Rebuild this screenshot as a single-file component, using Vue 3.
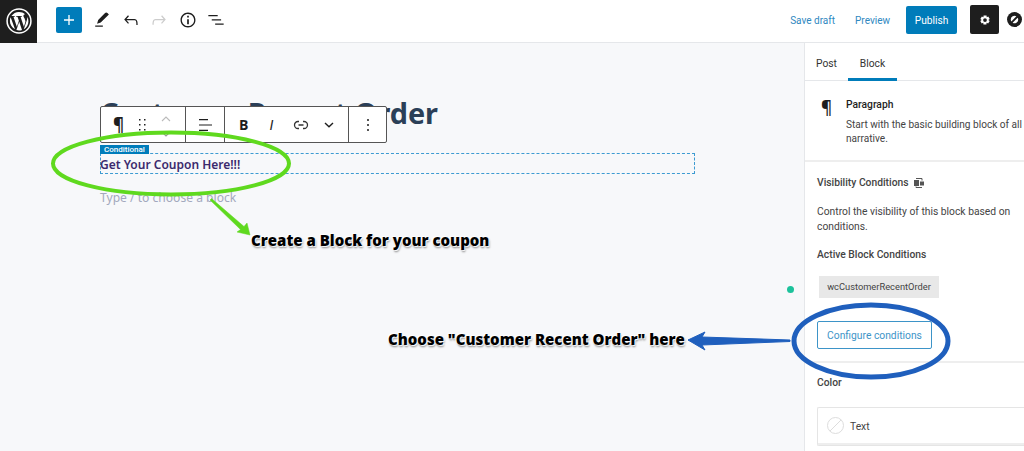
<template>
  <div class="page">
    <header class="topbar">
      <div class="wp-logo">
        <svg viewBox="0 0 24 24" width="26" height="26">
          <circle cx="12" cy="12" r="11" fill="none" stroke="#fff" stroke-width="1.4" />
          <path d="M3.6 12c0 3.3 1.9 6.200 4.700 7.500L4.300 8.600C3.800 9.600 3.600 10.800 3.600 12zM17.600 11.600c0-1-.4-1.800-.7-2.300-.4-.7-.8-1.300-.8-2 0-.8.600-1.500 1.400-1.500h.1C16.100 4.400 14.200 3.600 12 3.600c-2.900 0-5.500 1.500-7 3.800h.5c.9 0 2.300-.1 2.300-.1.500 0 .5.700.1.700 0 0-.5.100-1 .1l3.100 9.300 1.900-5.700-1.300-3.600c-.5 0-.9-.1-.9-.1-.5 0-.4-.8 0-.7 0 0 1.400.1 2.300.1.900 0 2.300-.1 2.300-.1.500 0 .5.700.1.700 0 0-.5.100-1 .1l3.100 9.200.9-2.800c.4-1.200.6-2 .6-2.900zM12.200 12.800l-2.600 7.500c.8.200 1.600.4 2.400.4 1 0 2-.2 2.800-.5l-.1-.1-2.500-7.300zM19.600 8c0 .3.100.6.100 1 0 .9-.2 1.800-.7 3.100l-2.600 7.600c2.600-1.500 4.300-4.300 4.300-7.500 0-1.600-.4-3-1.100-4.200z" fill="#fff" />
        </svg>
      </div>
      <div class="tools">
        <button class="add-btn">
          <svg viewBox="0 0 24 24" width="20" height="20"><path d="M18 11.200h-5.200V6h-1.600v5.200H6v1.600h5.200V18h1.600v-5.200H18z" fill="#fff" /></svg>
        </button>
        <svg class="tool" viewBox="0 0 24 24" width="24" height="24"><path d="M20.100 5.600 18.400 3.900c-.8-.8-2-.8-2.800 0L7.500 12l-1.300 4.300 4.300-1.300 8.100-8.100zM4 20h9v-1.500H4z" fill="#1e1e1e" /></svg>
        <svg class="tool" viewBox="0 0 24 24" width="24" height="24"><path d="M18.300 11.700c-.6-.6-1.400-.9-2.300-.9H6.700l2.900-3.300-1.100-1-4.500 5L8.500 16.500l1.100-1-2.900-3.300H16c.5 0 .9.200 1.300.5 1 1 1 3.400 1 4.500v.8h1.500v-.8c0-1.300 0-4.100-1.500-5.500z" fill="#1e1e1e" /></svg>
        <svg class="tool" viewBox="0 0 24 24" width="24" height="24"><path d="M15.600 6.500l-1.100 1 2.900 3.300H8c-.9 0-1.700.3-2.300.9-1.400 1.500-1.400 4.200-1.400 5.600v.2h1.500v-.3c0-1.100 0-3.500 1-4.500.3-.3.700-.5 1.300-.5h9.200l-2.900 3.300 1.100 1 4.500-5-4.400-5z" fill="#ccc" /></svg>
        <svg class="tool" viewBox="0 0 24 24" width="24" height="24"><path d="M12 3.200c-4.800 0-8.800 3.900-8.800 8.800 0 4.800 3.900 8.800 8.800 8.800 4.800 0 8.800-3.900 8.800-8.800 0-4.800-4-8.800-8.800-8.800zm0 16c-4 0-7.200-3.300-7.200-7.200C4.800 8 8 4.800 12 4.800s7.200 3.300 7.200 7.200c0 4-3.200 7.200-7.200 7.200zM11 17h2v-6h-2v6zm0-8h2V7h-2v2z" fill="#1e1e1e" /></svg>
        <svg class="tool" viewBox="0 0 24 24" width="24" height="24"><path d="M3 6h11v1.500H3zM7 11h11v1.500H7zM11 16h10v1.500H11z" fill="#1e1e1e" /></svg>
      </div>
      <div class="actions">
        <span class="link">Save draft</span>
        <span class="link">Preview</span>
        <button class="publish">Publish</button>
        <button class="settings">
          <svg viewBox="0 0 24 24" width="18" height="18"><path d="M20.700 13.300 18.800 12l1.900-1.300-1.900-3.400-2.100 1-.2-2.300h-4l-.2 2.300-2.100-1-2 3.400L10 12l-1.900 1.300 1.900 3.400 2.100-1 .2 2.300h4l.2-2.300 2.100 1zM14.400 14.500a2.500 2.500 0 1 1 0-5 2.500 2.500 0 0 1 0 5z" transform="translate(-2.400 0)" fill="#fff" /></svg>
        </button>
        <svg class="plugin" viewBox="0 0 20 20" width="15" height="15">
          <circle cx="10" cy="10" r="10" fill="#1e1e1e" />
          <path d="M5 10a5 5 0 0 1 7.500-4.300L5.800 12.500A5 5 0 0 1 5 10zM15 10a5 5 0 0 1-7.500 4.300l6.700-6.800c.5.700.8 1.600.8 2.500z" fill="#fff" />
        </svg>
      </div>
    </header>

    <div class="body">
      <main class="canvas">
        <h1 class="post-title">Customer Recent Order</h1>
        <div class="block-wrap">
          <div class="toolbar">
            <div class="tb-group first">
              <span class="pilcrow">¶</span>
              <svg viewBox="0 0 7 12" width="7" height="12"><g fill="#1e1e1e"><rect y="0" width="1.500" height="1.500" /><rect x="5" y="0" width="1.500" height="1.500" /><rect y="5" width="1.500" height="1.500" /><rect x="5" y="5" width="1.500" height="1.500" /><rect y="10" width="1.500" height="1.500" /><rect x="5" y="10" width="1.500" height="1.500" /></g></svg>
              <div class="movers">
                <svg viewBox="0 0 10 6" width="10" height="6"><path d="M1 5l4-4 4 4" fill="none" stroke="#bbb" stroke-width="1.100" /></svg>
                <svg viewBox="0 0 10 6" width="10" height="6"><path d="M1 1l4 4 4-4" fill="none" stroke="#999" stroke-width="1.100" /></svg>
              </div>
            </div>
            <div class="tb-group align">
              <svg viewBox="0 0 14 12" width="14" height="12"><path d="M1 0h9v1.200H1zM1 5.400h13v1.200H1zM1 10.800h9V12H1z" fill="#1e1e1e" /></svg>
            </div>
            <div class="tb-group format">
              <b class="fmt-b">B</b>
              <i class="fmt-i">I</i>
              <svg class="fmt-link" viewBox="0 0 16 10" width="16" height="10"><path d="M6 1.500H5a3.500 3.500 0 0 0 0 7h1M10 1.500h1a3.500 3.500 0 0 1 0 7h-1M5.500 5h5" fill="none" stroke="#333" stroke-width="1.300" /></svg>
              <svg class="fmt-more" viewBox="0 0 10 6" width="10" height="6"><path d="M1 1l4 3.800L9 1" fill="none" stroke="#1e1e1e" stroke-width="1.400" /></svg>
            </div>
            <div class="tb-group more">
              <svg viewBox="0 0 4 12" width="4" height="12"><g fill="#1e1e1e"><circle cx="2" cy="1" r="1" /><circle cx="2" cy="6" r="1" /><circle cx="2" cy="11" r="1" /></g></svg>
            </div>
          </div>
          <div class="block">
            <span class="cond-label">Conditional</span>
            <p class="coupon">Get Your Coupon Here!!!</p>
          </div>
        </div>
        <p class="placeholder">Type / to choose a block</p>

        <svg class="annotations" viewBox="0 0 804 408" width="804" height="408">
          <ellipse cx="171" cy="120.500" rx="118" ry="31" fill="none" stroke="#5fd91e" stroke-width="4" />
          <path d="M210 157 L211.500 155.500 L244 183.500 L247 180 L250 192 L237 189 L240.500 186.500 Z" fill="#5fd91e" stroke="#5fd91e" stroke-width="0.500" stroke-linejoin="round" />
          <path d="M688 297 L705 289 L702 294 L790 297 L790 298.500 L702 302 L705 307 Z" fill="#1f5fbd" stroke="#1f5fbd" stroke-width="1" stroke-linejoin="round" />
        </svg>
        <span class="note note-coupon">Create a Block for your coupon</span>
        <span class="note note-order">Choose "Customer Recent Order" here</span>
        <span class="status-dot"></span>
      </main>

      <aside class="sidebar">
        <div class="tabs">
          <span class="tab">Post</span>
          <span class="tab active">Block</span>
        </div>
        <section class="card">
          <span class="card-icon">¶</span>
          <div>
            <h3 class="card-title">Paragraph</h3>
            <p class="card-text">Start with the basic building block of all narrative.</p>
          </div>
        </section>
        <section class="panel">
          <h4 class="panel-title">
            Visibility Conditions
            <svg viewBox="0 0 12 12" width="12" height="12"><path d="M1 3h5v6H1zM7 4.500h4v4H7z" fill="#555" /><path d="M3 1.500h6v2M9 10.500H3v-1" fill="none" stroke="#555" stroke-width="1" /></svg>
          </h4>
          <p class="panel-text">Control the visibility of this block based on conditions.</p>
          <h5 class="panel-sub">Active Block Conditions</h5>
          <div class="chip">wcCustomerRecentOrder</div>
          <button class="configure">Configure conditions</button>
        </section>
        <section class="panel color">
          <h4 class="color-title">Color</h4>
          <div class="color-box">
            <div class="color-row">
              <span class="swatch"></span>
              <span class="row-label">Text</span>
            </div>
          </div>
        </section>
      </aside>
    </div>

    <svg class="overlay" viewBox="0 0 1024 451" width="1024" height="451">
      <ellipse cx="871" cy="341" rx="77" ry="36" fill="none" stroke="#1f5fbd" stroke-width="5" />
    </svg>
  </div>
</template>

<script setup>
</script>

<style>
html, body {
  margin: 0;
  background: #fff;
}
</style>

<style scoped>
.page {
  position: relative;
  width: 1024px;
  height: 451px;
  overflow: hidden;
  font-family: "Noto Sans", sans-serif;
  color: #1e1e1e;
  background: #fff;
}

.topbar {
  display: flex;
  align-items: center;
  height: 43px;
  box-sizing: border-box;
  border-bottom: 1px solid #e5e7ea;
}

.wp-logo {
  width: 37px;
  height: 43px;
  background: #1e1e1e;
  display: flex;
  align-items: center;
  justify-content: center;
}

.tools {
  display: flex;
  align-items: center;
  margin-left: 19px;
  margin-top: -3px;
}

.add-btn {
  width: 26px;
  height: 26px;
  padding: 0;
  border: 0;
  border-radius: 2px;
  background: #007cba;
  display: flex;
  align-items: center;
  justify-content: center;
  margin-right: 5.750px;
}

.tool {
  margin: 0 2.250px;
  transform: scale(0.85);
}

.actions {
  display: flex;
  align-items: center;
  margin-left: auto;
  margin-top: -3px;
}

.link {
  font-family: Roboto, sans-serif;
  font-size: 10px;
  padding-top: 2px;
  color: #2f88bf;
  margin-right: 20px;
}

.publish {
  width: 51px;
  height: 28px;
  padding: 2px 0 0;
  border: 0;
  border-radius: 2px;
  background: #007cba;
  color: #fff;
  font: 10.200px Roboto, sans-serif;
  margin-right: 13px;
  margin-left: -4px;
}

.settings {
  width: 29px;
  height: 29px;
  padding: 0;
  border: 0;
  border-radius: 2px;
  background: #1e1e1e;
  display: flex;
  align-items: center;
  justify-content: center;
  margin-right: 8px;
}

.plugin {
  margin-right: 2px;
}

.body {
  display: flex;
  height: 408px;
}

.canvas {
  position: relative;
  flex: 0 0 804px;
  box-sizing: border-box;
  padding: 53px 0 0 100px;
  background: #f7f8fa;
}

.post-title {
  margin: 0;
  font-size: 28.800px;
  line-height: 34px;
  font-weight: 700;
  color: #2b3f57;
}

.block-wrap {
  position: relative;
  width: 595px;
  margin-top: 23px;
}

.toolbar {
  position: absolute;
  left: 0;
  top: -47px;
  display: flex;
  height: 37px;
  box-sizing: border-box;
  border: 1px solid #555;
  border-radius: 2px;
  background: #fff;
}

.tb-group {
  display: flex;
  align-items: center;
  justify-content: center;
  border-right: 1px solid #555;
}

.tb-group:last-child {
  border-right: 0;
}

.first {
  width: 85px;
  gap: 15px;
  box-sizing: border-box;
}

.movers {
  display: flex;
  flex-direction: column;
  gap: 9px;
  margin-top: 3px;
}

.pilcrow {
  font-size: 17px;
  font-weight: 700;
  margin-left: -2px;
}

.align {
  width: 38px;
}

.format {
  width: 124px;
  justify-content: flex-start;
  padding-left: 14px;
  box-sizing: border-box;
}

.fmt-b {
  font-family: "Open Sans", sans-serif;
  font-size: 14px;
}

.fmt-i {
  font-family: "Liberation Sans", sans-serif;
  font-size: 14px;
  font-weight: 400;
  margin-left: 21px;
}

.fmt-link {
  margin-left: 20px;
}

.fmt-more {
  margin-left: 15px;
}

.more {
  width: 37px;
}

.block {
  position: relative;
  height: 21px;
  box-sizing: border-box;
  border: 1px dashed #3d9bd2;
}

.cond-label {
  position: absolute;
  left: -1px;
  top: -9px;
  width: 49px;
  height: 9px;
  background: #007cba;
  color: #fff;
  font-family: Roboto, sans-serif;
  font-size: 8px;
  line-height: 9px;
  font-weight: 500;
  text-align: center;
}

.coupon {
  margin: 0 0 0 -1px;
  font-size: 12px;
  line-height: 21px;
  font-weight: 600;
  color: #3b2a6d;
}

.placeholder {
  margin: 15px 0 0;
  font-size: 12.100px;
  line-height: 18px;
  color: #a3a8bd;
}

.annotations {
  position: absolute;
  left: 0;
  top: 0;
}

.note {
  position: absolute;
  font-family: "Open Sans", sans-serif;
  font-weight: 800;
  font-size: 15px;
  line-height: 18px;
  color: #000;
  white-space: nowrap;
  text-shadow: 1px 1px 1px #fff, -1px -1px 1px #fff, 1px 2px 2px #888;
}

.note-coupon {
  left: 251px;
  top: 188px;
}

.note-order {
  left: 388px;
  top: 287px;
}

.status-dot {
  position: absolute;
  left: 787px;
  top: 243px;
  width: 7px;
  height: 7px;
  border-radius: 50%;
  background: #1cc29b;
}

.sidebar {
  flex: 1;
  box-sizing: border-box;
  border-left: 1px solid #e5e7ea;
  background: #fff;
  overflow: hidden;
  font-family: Roboto, sans-serif;
}

.tabs {
  display: flex;
  height: 38px;
  box-sizing: border-box;
  border-bottom: 1px solid #e5e7ea;
}

.tab {
  width: 43px;
  font-size: 10.300px;
  line-height: 41px;
  text-align: center;
  color: #333;
}

.tab.active {
  width: 49px;
  height: 38px;
  box-sizing: border-box;
  border-bottom: 3px solid #007cba;
}

.card {
  display: flex;
  height: 81px;
  box-sizing: border-box;
  padding: 16px 0 0 16px;
  border-bottom: 2px solid #eee;
}

.card-icon {
  width: 25px;
  flex: none;
  font-family: "Noto Sans", sans-serif;
  font-size: 17px;
  line-height: 24px;
  font-weight: 600;
  margin-top: -1px;
}

.card-title {
  margin: 0 0 5px;
  font-size: 10.300px;
  line-height: 16px;
  font-weight: 500;
}

.card-text {
  margin: 0;
  width: 178px;
  font-size: 10.100px;
  line-height: 14px;
  color: #444;
}

.panel {
  padding: 13px 0 0 12px;
  width: 220px;
  box-sizing: border-box;
}

.panel-title {
  display: flex;
  align-items: center;
  gap: 4px;
  margin: 0;
  font-size: 10.300px;
  line-height: 16px;
  font-weight: 500;
  color: #444;
}

.panel-text {
  margin: 13px 0 0;
  font-size: 10.300px;
  line-height: 15px;
  color: #444;
}

.panel-sub {
  margin: 13px 0 0;
  font-size: 10.300px;
  line-height: 16px;
  font-weight: 500;
  color: #444;
}

.chip {
  width: 120px;
  height: 22px;
  margin: 13px 0 0 2px;
  background: #e8e8e8;
  font-size: 9.300px;
  line-height: 22px;
  text-align: center;
  color: #444;
}

.configure {
  display: block;
  width: 115px;
  height: 28px;
  margin-top: 23px;
  padding: 0;
  background: #fff;
  border: 1px solid #3d94c8;
  border-radius: 2px;
  color: #3d94c8;
  font: 10.300px Roboto, sans-serif;
}

.color {
  width: 100%;
  margin-top: 12px;
  padding-top: 12px;
  border-top: 2px solid #eee;
}

.color-title {
  margin: 0;
  font-size: 10.300px;
  line-height: 16px;
  font-weight: 500;
  color: #444;
}

.color-box {
  margin-top: 16px;
  border: 1px solid #e5e5e5;
  border-right: 0;
  border-radius: 2px 0 0 2px;
}

.color-row {
  display: flex;
  align-items: center;
  gap: 6px;
  height: 37px;
  box-sizing: border-box;
  padding-left: 9px;
  border-bottom: 2px solid #eee;
  font-size: 10.300px;
  color: #444;
}

.row-label {
  padding-top: 2px;
}

.swatch {
  width: 15px;
  height: 15px;
  border: 1px solid #ddd;
  border-radius: 50%;
  background: linear-gradient(135deg, transparent 47%, #ddd 47%, #ddd 53%, transparent 53%);
}

.overlay {
  position: absolute;
  left: 0;
  top: 0;
  pointer-events: none;
}
</style>
